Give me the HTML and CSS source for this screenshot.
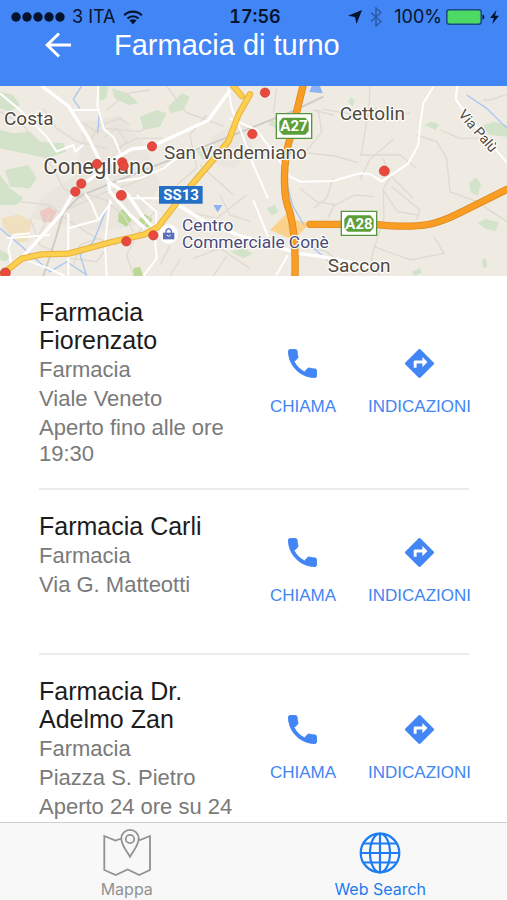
FILE: index.html
```html
<!DOCTYPE html>
<html lang="it">
<head>
<meta charset="utf-8">
<meta name="viewport" content="width=device-width, initial-scale=1">
<title>Farmacia di turno</title>
<link rel="stylesheet" href="styles.css">
</head>
<body>
<svg class="sprite" aria-hidden="true">
  <symbol id="phone" viewBox="2.700 2.700 18.600 18.600"><path stroke-width=".6" d="M6.62 10.79c1.44 2.83 3.76 5.14 6.59 6.59l2.2-2.2c.27-.27.67-.36 1.02-.24 1.12.37 2.33.57 3.57.57.55 0 1 .45 1 1V20c0 .55-.45 1-1 1-9.39 0-17-7.61-17-17 0-.55.45-1 1-1h3.5c.55 0 1 .45 1 1 0 1.25.2 2.45.57 3.57.11.35.03.74-.25 1.02l-2.2 2.2z"/></symbol>
  <symbol id="directions" viewBox="2 2 20 20"><path stroke="none" d="M21.71 11.29l-9-9a.996.996 0 0 0-1.41 0l-9 9a.996.996 0 0 0 0 1.41l9 9c.39.39 1.02.39 1.41 0l9-9a.996.996 0 0 0 0-1.41zM14 14.5V12h-4v3H8v-4c0-.55.45-1 1-1h5V7.5l3.500 3.500-3.500 3.500z"/></symbol>
</svg>
<header class="header">
  <div class="status">
    <div class="status-side">
      <svg class="signal" viewBox="0 0 54 10" aria-hidden="true"><circle cx="5" cy="5" r="4.700"/><circle cx="16" cy="5" r="4.700"/><circle cx="27" cy="5" r="4.700"/><circle cx="38" cy="5" r="4.700"/><circle cx="49" cy="5" r="4.700"/></svg>
      <span>3 ITA</span>
      <svg class="wifi" viewBox="0 0 20 15" aria-hidden="true"><path d="M1.200 5.200C6.200.4 13.800.4 18.800 5.200M4.500 8.500c3.200-3 7.800-3 11 0" fill="none" stroke="#04132e" stroke-width="2.200"/><path d="M6.500 10.500c2-1.800 5-1.800 7 0L10 14.200z"/></svg>
    </div>
    <strong class="time">17:56</strong>
    <div class="status-side status-right">
      <svg class="location" viewBox="0 0 14 14" aria-hidden="true"><path d="M14 0L8.500 14 7 7 0 5.700z"/></svg>
      <svg class="bluetooth" viewBox="0 0 12 20" aria-hidden="true"><path d="M1 5.500l10 9L6 19V1l5 4.500-10 9" fill="none" stroke="#2d5aa8" stroke-width="1.500"/></svg>
      <span>100%</span>
      <svg class="battery" viewBox="0 0 40 16" aria-hidden="true"><rect x=".8" y=".8" width="34.400" height="14.400" rx="2.500" fill="#4cd964" stroke="#174a86" stroke-width="1.500"/><path d="M36.500 5.500c2.600.5 2.600 4.500 0 5z"/></svg>
      <svg class="bolt" viewBox="0 0 9 14" aria-hidden="true"><path d="M6.500 0L0 8h3.800L2.300 14 9 5.700H5z"/></svg>
    </div>
  </div>
  <div class="titlebar">
    <button class="back" type="button" aria-label="Indietro"><svg viewBox="0 0 26 26" aria-hidden="true"><path d="M26 13H2M14 1.500L2.200 13 14 24.500" fill="none" stroke="#fff" stroke-width="3"/></svg></button>
    <h1>Farmacia di turno</h1>
  </div>
</header>
<main class="content">
  <svg class="map" viewBox="0 3 1521 570" role="img" aria-label="Mappa delle farmacie">
    <rect class="land" y="3" width="1521" height="570"/>
    <path class="urban" d="M250 110L360 90 440 190 480 300 410 420 300 440 190 420 90 400 130 330 230 270zM640 150L740 110 760 200 700 250 620 230z"/>
    <g class="green">
      <path d="M0 20l40 10 20 30-30 20-30-10zM0 135l40 10 50-5 30 30 70 5 10 25-60 20-70-15-70-15zM15 255l70-15 25 40-20 30-60-5zM0 270l30 40 40 30-20 20H0zM295 3h30l-5 35-20 10zM335 10l50 15 30 30-30 5-40-20zM420 95l50-20 30 10-20 40-50 10zM505 65l40-40 25 10-20 40-40 10zM690 500l40-10 30 15-30 15zM590 200l40-15 10 20-30 20zM0 495l30 15-10 20-20-5z"/>
      <path d="M1272 120l20-10 25 8-10 18zM1440 125l40-15 41 10v35l-50-5zM1408 295l20-18 15 20-10 35-20-10zM1432 415l25-12 40 8-10 28-30-8zM800 370l25-10 10 20-20 12zM1043 50l10-12 12 8-8 18zM805 120l15-20 10 30zM1445 525l12-5 5 25-12 3zM1235 560l25-12 5 15-20 10zM1120 75l10-10 5 20z"/>
    </g>
    <path class="park" d="M355 385l15-15 25 35-15 20-25-15zM415 405l20-18 22 15-10 25-27-5zM400 550l20-5 10 28h-30z"/>
    <path class="sand" d="M5 400l50-12 40 20-10 60-30 5-45-45z"/>
    <path class="junction" d="M810 435l55-55 20 25 45 10-35 35-15 15z"/>
    <path class="pink" d="M118 380l30-15 22 15-15 30-25 2z"/>
    <g class="lane">
      <path d="M0 80l70 40 90 130 30 60 60 30M130 70l40 60 60 40 90 20M60 350l90 10 60 50 80 50 60 20M210 370l110-50 90-30 110-60M350 190l60-30 80 0M270 170l30-50 60-20 30 20M320 130l100 10 60-40M320 75l60-50 70-10M500 3l60 80 110 40M240 110l50 30M310 160l40-30 30 40-30 30M90 400l30 80 90 40 80 10 30-40M220 540l20-60 50-20M150 390l-40 70M480 540l30-60M510 573l30-50M560 380l90 20 90-70M620 90l-50 60 20 100-60 50M660 330l30 60 60 20M600 240l100 90M470 370l-60 80-30 60 20 60M580 520l80-30 90 60M640 573l40-60M320 350l50 40 30 50M210 320l60 10 60 20"/>
      <path d="M955 73l10 70-50 60M970 73l180 30 80-20M1110 3l-3 60-24 150M1080 210l120 0 50 40M915 203l90 10 70 20M1180 163l-70 60-30 60M1250 150l60 20 30 50 10 100 80 30 91 60M1320 135l60 25 70 0M1150 220l20 60-20 30 2 90-30 90M1152 320l40 60 65 10M1175 305l85 70-10 30M1170 270l70 70M900 310l50 40 60 10M1003 360l-20 40M1005 360l60-30 60 5M1000 280l-20 60-40 30M910 480l70 20 60 50M1122 485l110 40 100-20-30-50M1122 485l-10 60M1530 25l-60 20-20 0M820 85l10-75M1000 90l-60-15"/>
    </g>
    <g class="rail"><path d="M130 573l30-90 30-100 50-50 110-45 330-130 200-80 90-43"/></g>
    <g class="river">
      <path d="M245 3l-25 40 20 28M298 85l-5 60M320 370l-20 50-20 50-40 40 20 63M0 430l60 50 90 80 50-30 60 40M862 300l15 60 35 60M930 480l70 60M1400 30l60 40 61 60"/>
      <path class="water" d="M640 360l27 0-14 22zM935 3h25l8 22-40-4z"/>
    </g>
    <g class="road wide"><path d="M125 3l80 60 60 95 40 80 20 50M65 520L185 385l40-70 70-50 50-45 50-28 60-6 40-20 130-60 65-90M325 290l60 40 40 60 40 45M325 290l5 30 60 70 45 40M535 360l80 50 100 40 180 55 70 10 150 30"/></g>
    <g class="road">
      <path d="M0 25l60 50 80 80 30 45 50-20 5 20 25-20M170 35l45 40h80M295 3l-3 60 20 70 30 25 20 50M350 290l70-10 70-30 40-30M255 325l20 30 20 50M205 385v190M205 430l90-25 40-55M20 460l130-10M65 520l80 30 50 23M35 540l-10-50 15-40 50-5M320 573l-5-100 15-130M470 380l-60-50M470 380l-5 80 5 60-40 53M385 340l90 0 60 20M685 10l10 60 25 60 40 110 44 100M690 100l80 35 60 80 40 60 30 15 100-2 80-23 30 2 35 23 80-55 30-55 5-60 10-65 30-50M760 345l44 110M1372 3l-5 40 50 70 104 120M864 510l-35 60"/>
    </g>
    <path class="yellow-edge" d="M0 573l65-52 60-13 80-2 130-35 100-23 40-23 65-85 90-105 55-65 30-80 35-62M700 3l25 30"/>
    <path class="yellow" d="M0 573l65-52 60-13 80-2 130-35 100-23 40-23 65-85 90-105 55-65 30-80 35-62M700 3l25 30"/>
    <path class="orange-edge" d="M909 3q-20 80-37 150-22 70-18 150 0 40 16 80 18 70 15 190M930 418h190c150 15 190 0 260-35l141-70"/>
    <path class="orange" d="M909 3q-20 80-37 150-22 70-18 150 0 40 16 80 18 70 15 190M930 418h190c150 15 190 0 260-35l141-70"/>
    <g class="place">
      <text x="12" y="120">Costa</text>
      <text class="city" x="130" y="266">Conegliano</text>
      <text x="492" y="223">San Vendemiano</text>
      <text x="1019" y="106">Cettolin</text>
      <text x="983" y="560">Saccon</text>
      <text class="street" transform="translate(1373 89) rotate(49)">Via Palù</text>
    </g>
    <text class="shop"><tspan x="546" y="438">Centro</tspan> <tspan x="546" y="490">Commerciale Conè</tspan></text>
    <circle cx="506" cy="447" r="29" fill="#fff"/>
    <path d="M489 443h34v20h-34z" fill="#5b6eb9"/><path d="M498 445v-8q8-12 16 0v8" fill="none" stroke="#5b6eb9" stroke-width="4"/><path d="M500 450q6 8 12 0" fill="none" stroke="#fff" stroke-width="3"/>
    <g class="shield">
      <path d="M477 303h131v53H477z" fill="#2470c4"/>
      <path class="sign" d="M829 86h106v74H829zM1024 379h106v72h-106z"/>
      <path class="plate" d="M848 98h68l10 12v27l-10 12h-68l-10-12v-27zM1043 391h68l10 12v25l-10 12h-68l-10-12v-25z"/>
      <text x="543" y="345">SS13</text><text x="882" y="139">A27</text><text x="1077" y="431">A28</text>
    </g>
    <g class="pin">
      <circle cx="456" cy="184" r="14"/><circle cx="291" cy="237" r="14"/><circle cx="367" cy="232" r="14"/><circle cx="371" cy="243" r="14"/><circle cx="244" cy="296" r="14"/><circle cx="226" cy="320" r="14"/><circle cx="364" cy="331" r="15"/><circle cx="379" cy="469" r="14"/><circle cx="460" cy="451" r="14"/><circle cx="16" cy="564" r="15"/><circle cx="757" cy="147" r="14"/><circle cx="795" cy="23" r="14"/><circle cx="1153" cy="258" r="15"/>
    </g>
  </svg>
  <ul class="list">
    <li class="item">
      <div class="info"><h2>Farmacia Fiorenzato</h2><p>Farmacia</p><p>Viale Veneto</p><p>Aperto fino alle ore 19:30</p></div>
      <div class="actions">
        <button type="button"><svg aria-hidden="true"><use href="#phone"/></svg>CHIAMA</button>
        <button type="button"><svg aria-hidden="true"><use href="#directions"/></svg>INDICAZIONI</button>
      </div>
    </li>
    <li class="item">
      <div class="info"><h2>Farmacia Carli</h2><p>Farmacia</p><p>Via G. Matteotti</p></div>
      <div class="actions">
        <button type="button"><svg aria-hidden="true"><use href="#phone"/></svg>CHIAMA</button>
        <button type="button"><svg aria-hidden="true"><use href="#directions"/></svg>INDICAZIONI</button>
      </div>
    </li>
    <li class="item">
      <div class="info"><h2>Farmacia Dr. Adelmo Zan</h2><p>Farmacia</p><p>Piazza S. Pietro</p><p>Aperto 24 ore su 24</p></div>
      <div class="actions">
        <button type="button"><svg aria-hidden="true"><use href="#phone"/></svg>CHIAMA</button>
        <button type="button"><svg aria-hidden="true"><use href="#directions"/></svg>INDICAZIONI</button>
      </div>
    </li>
  </ul>
</main>
<nav class="tabs">
  <a class="tab" href="#mappa">
    <svg viewBox="0 0 50 50" aria-hidden="true"><g fill="none" stroke="#929292" stroke-width="1.800"><path d="M19.500 10.500L13.500 12.500 2.300 8v34l11.400 5 12-5.500 11.500 5.500L48 42V8l-10 4-2-.8"/><path d="M28 28.700C24 22 19.300 17 19.300 10.500a8.700 8.700 0 0 1 17.400 0c0 6.500-4.700 11.500-8.700 18.200z"/><circle cx="28" cy="11" r="4.200"/></g></svg>
    Mappa
  </a>
  <a class="tab active" href="#web" aria-current="page">
    <svg viewBox="0 0 50 50" aria-hidden="true"><g fill="none" stroke="#1d7cf2" stroke-width="2.200"><circle cx="25" cy="25" r="19.300"/><ellipse cx="25" cy="25" rx="10" ry="19.300"/><path d="M25 5.700v38.600M5.700 25h38.600M9 15.500h32M9 34.500h32"/></g></svg>
    Web Search
  </a>
</nav>
</body>
</html>
```
FILE: styles.css
```css
* { box-sizing: border-box; }

body {
  margin: 0;
  height: 100vh;
  display: flex;
  flex-direction: column;
  background: #fff;
  font-family: "Liberation Sans", Arial, sans-serif;
}

h1, h2, p, ul { margin: 0; padding: 0; font-weight: 400; }
button { border: 0; padding: 0; background: none; font: inherit; }
svg { display: block; flex: none; }
.sprite { position: absolute; width: 0; height: 0; }

.header { flex: none; background: #4285f4; padding-bottom: 24px; }

.status {
  display: grid;
  grid-template-columns: 1fr auto 1fr;
  align-items: center;
  height: 28px;
  padding: 6px 8px 0 11px;
  font: 18px/22px Inter, sans-serif;
  color: #04132e;
  fill: #04132e;
}
.status-side { display: flex; align-items: center; gap: 7px; }
.status-right { justify-content: flex-end; gap: 4px; }
.time { font-weight: 600; font-variant-numeric: tabular-nums; }
.signal { width: 54px; height: 10px; }
.wifi { width: 20px; height: 15px; }
.location { width: 14px; height: 14px; margin-right: 4px; }
.bluetooth { width: 12px; height: 20px; margin-right: 8px; }
.battery { width: 40px; height: 16px; }
.bolt { width: 9px; height: 14px; }

.titlebar { display: flex; align-items: center; gap: 43px; padding-left: 45px; height: 34px; }
.titlebar h1 { font-size: 29px; line-height: 34px; color: #fff; }
.back svg { width: 26px; height: 26px; }

.content { flex: 1; min-height: 0; overflow-y: auto; scrollbar-width: none; }

.map { width: 100%; height: auto; font-family: Roboto, sans-serif; }
.land { fill: #efebe3; }
.urban { fill: #ebe6dd; }
.green { fill: #d3e3c9; }
.park { fill: #b9d894; }
.sand { fill: #f0e0c0; }
.junction { fill: #fbd28c; }
.pink { fill: #edc8c4; }
.lane { fill: none; stroke: #dfdad1; stroke-width: 4; }
.rail { fill: none; stroke: #cfccc7; stroke-width: 6; }
.river { fill: none; stroke: #a9c5f2; stroke-width: 4; }
.river .water { fill: #8eb2f3; stroke: none; }
.road { fill: none; stroke: #fff; stroke-width: 6; stroke-linejoin: round; }
.road.wide { stroke-width: 10; }
.yellow-edge, .yellow, .orange-edge, .orange { fill: none; stroke-linejoin: round; stroke-linecap: round; }
.yellow-edge { stroke: #eab13c; stroke-width: 19; }
.yellow { stroke: #fccf4f; stroke-width: 13; }
.orange-edge { stroke: #dc8a1c; stroke-width: 22; }
.orange { stroke: #f99d25; stroke-width: 17; }
.place { font-size: 57px; fill: #50483c; stroke: #fff; stroke-width: 7; stroke-linejoin: round; paint-order: stroke; }
.place .city { font-size: 66px; }
.place .street { font-size: 42px; }
.shop { font-size: 52px; fill: #4a4a78; stroke: #fff; stroke-width: 7; stroke-linejoin: round; paint-order: stroke; }
.shield text { fill: #fff; font-size: 45px; font-weight: 700; text-anchor: middle; }
.shield .sign { fill: #fff; stroke: #58953f; stroke-width: 4; }
.shield .plate { fill: #5c9e3a; }
.pin { fill: #e8483d; stroke: #c93a31; stroke-width: 2; }

.list { list-style: none; padding: 0 38px 0 39px; }
.item { display: flex; align-items: center; gap: 32px; padding: 22px 0 21px; border-bottom: 2px solid #ececec; }
.info { flex: 1; display: flex; flex-direction: column; align-self: flex-start; gap: 3px; font-size: 22px; line-height: 26px; color: #7a7a7a; }
.info h2 { font-size: 25px; line-height: 28px; color: #1c1c1c; }
.actions { display: flex; align-items: center; gap: 32px; min-height: 120px; margin-right: -2px; }
.actions button { display: flex; flex-direction: column; align-items: center; gap: 19px; font-size: 17px; line-height: 20px; color: #4285f4; }
.actions svg { width: 29px; height: 29px; fill: #4285f4; stroke: #4285f4; }

.tabs { flex: none; display: flex; height: 78px; border-top: 1px solid #cfcfcf; background: #f8f8f8; }
.tab { flex: 1; display: flex; flex-direction: column; align-items: center; padding-top: 5px; font: 16px/22px Inter, sans-serif; color: #929292; text-decoration: none; }
.tab svg { width: 50px; height: 50px; }
.tab.active { color: #1d7cf2; }
```
